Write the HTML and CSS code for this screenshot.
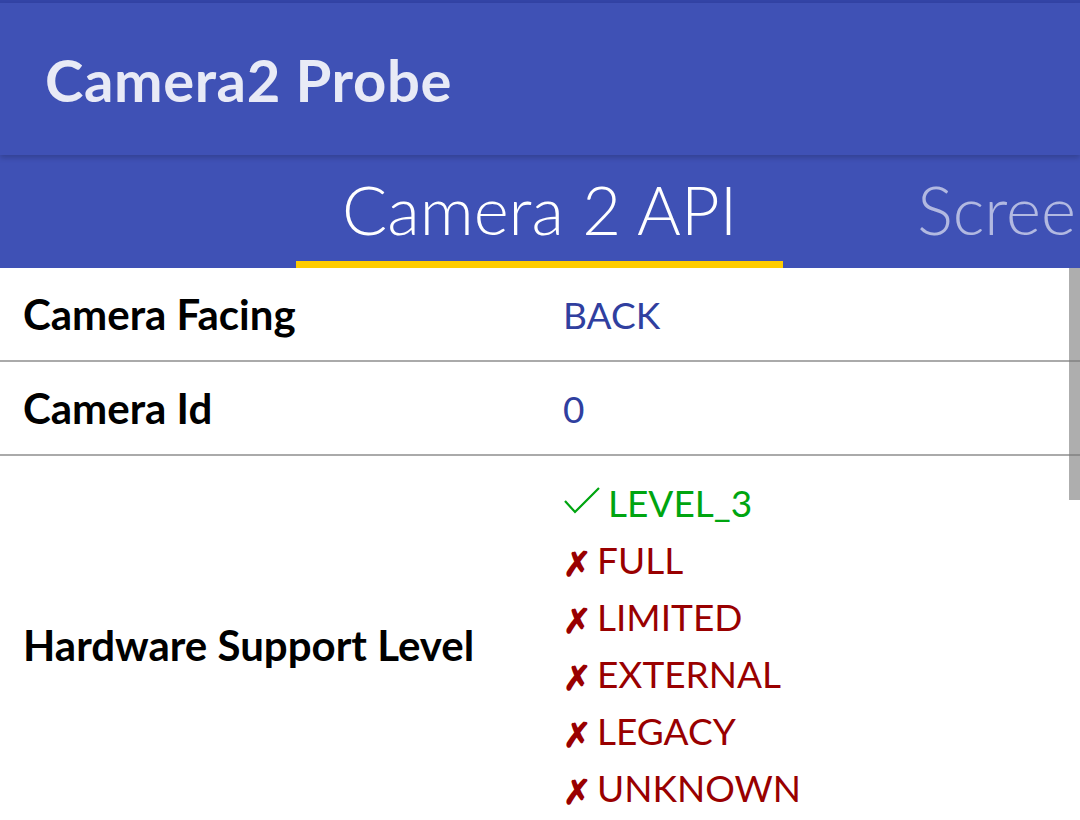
FILE: index.html
```html
<!DOCTYPE html>
<html lang="en">
<head>
    <meta charset="UTF-8">
    <meta name="viewport" content="width=device-width, initial-scale=1.0">
    <title>Camera2 Probe</title>
    <link rel="stylesheet" href="styles.css">
</head>
<body>
    <div class="app">
        <div class="status-edge"></div>
        <header class="appbar">
            <h1>Camera2 Probe</h1>
        </header>
        <nav class="tabs">
            <div class="tab active">Camera 2 API</div>
            <div class="tab">Screen</div>
        </nav>
        <main class="content">
            <div class="row">
                <div class="label">Camera Facing</div>
                <div class="value">BACK</div>
            </div>
            <div class="row">
                <div class="label">Camera Id</div>
                <div class="value">0</div>
            </div>
            <div class="row tall">
                <div class="label">Hardware Support Level</div>
                <ul class="value levels">
                    <li class="ok">
                        <svg class="check" width="36" height="28" viewBox="0 0 36 28" fill="none" stroke="currentColor" stroke-width="2.2"><path d="M1 14 L11 25 L35 1"/></svg>LEVEL_3
                    </li>
                    <li class="no"><span class="mark">&#10007;</span>FULL</li>
                    <li class="no"><span class="mark">&#10007;</span>LIMITED</li>
                    <li class="no"><span class="mark">&#10007;</span>EXTERNAL</li>
                    <li class="no"><span class="mark">&#10007;</span>LEGACY</li>
                    <li class="no"><span class="mark">&#10007;</span>UNKNOWN</li>
                </ul>
            </div>
            <div class="scrollbar"></div>
        </main>
    </div>
</body>
</html>
```

FILE: styles.css
```css
body, html {
    margin: 0;
    padding: 0;
    height: 100%;
    background: #fff;
    font-family: 'Lato', 'Open Sans', sans-serif;
    overflow: hidden;
}
.app {
    display: flex;
    flex-direction: column;
    height: 100%;
}
.status-edge {
    height: 3px;
    flex-shrink: 0;
    background-color: #3344a6;
}
.appbar {
    height: 152px;
    flex-shrink: 0;
    background-color: #3f51b5;
    display: flex;
    align-items: center;
    padding-left: 45px;
    box-shadow: 0 3px 5px rgba(0, 0, 0, 0.18);
    position: relative;
    z-index: 2;
}
.appbar h1 {
    margin: 0;
    font-size: 58px;
    font-weight: 700;
    color: #e8eaf6;
    letter-spacing: 0.6px;
}
.tabs {
    height: 113px;
    flex-shrink: 0;
    background-color: #3f51b5;
    display: flex;
    padding-left: 296px;
    overflow: hidden;
    white-space: nowrap;
}
.tab {
    flex-shrink: 0;
    padding: 2px 46px 0;
    display: flex;
    align-items: center;
    font-size: 67px;
    font-weight: 300;
    color: rgba(255, 255, 255, 0.6);
    border-bottom: 7px solid transparent;
    margin-right: 88px;
}
.tab.active {
    color: #fff;
    border-bottom-color: #ffcc00;
}
.content {
    flex-grow: 1;
    position: relative;
}
.row {
    display: flex;
    align-items: center;
    border-bottom: 2px solid #aaa;
    height: 92px;
}
.row.tall {
    height: auto;
    border-bottom: none;
    padding: 18px 0;
}
.label {
    width: 540px;
    padding-left: 23px;
    font-size: 42px;
    font-weight: 700;
    color: #000;
}
.value {
    font-size: 37px;
    color: #303f9f;
}
.levels {
    list-style: none;
    margin: 0;
    padding: 0;
}
.levels li {
    height: 57px;
    display: flex;
    align-items: center;
}
.levels .ok {
    color: #00a510;
}
.levels .no {
    color: #990000;
}
.check {
    margin-left: 1px;
    margin-right: 8px;
    margin-top: -4px;
}
.mark {
    width: 34px;
    font-weight: 700;
    font-size: 34px;
    line-height: 1;
    margin-top: 6px;
}
.scrollbar {
    position: absolute;
    top: 0;
    right: 0;
    width: 11px;
    height: 232px;
    background-color: rgba(120, 120, 120, 0.6);
}
```
